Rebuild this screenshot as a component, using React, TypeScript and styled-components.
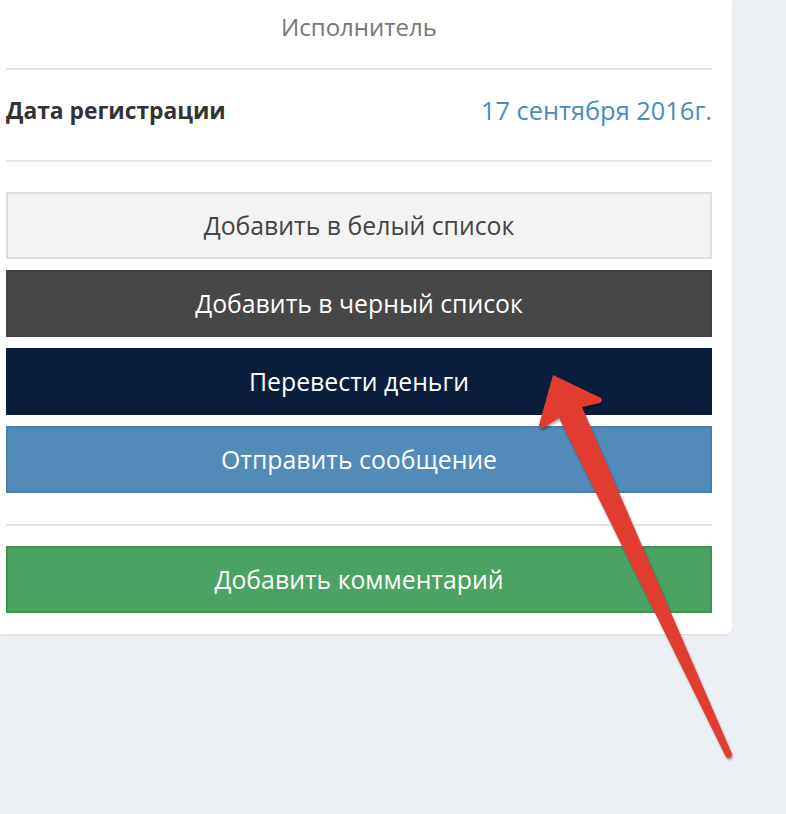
import React from "react";
import styled, { createGlobalStyle } from "styled-components";

const GlobalStyle = createGlobalStyle`
  html, body { margin: 0; padding: 0; }
  body { background: #eceff4; font-family: "Open Sans", "Noto Sans", sans-serif; }
`;

const Page = styled.div`
  position: relative;
  width: 786px;
  height: 814px;
  overflow: hidden;
  background: #eceff4;
`;

const Card = styled.div`
  width: 706px;
  padding: 0 20px 21px 6px;
  background: #ffffff;
  border-radius: 0 0 6px 0;
  box-shadow: 0 1px 2px rgba(0, 0, 0, 0.08);
  display: flex;
  flex-direction: column;
`;

const Title = styled.div`
  padding: 10px 0 24px;
  font-size: 24px;
  line-height: 34px;
  color: #777777;
  text-align: center;
`;

const Divider = styled.div<{ $gapBefore?: number; $gapAfter?: number }>`
  height: 2px;
  background: #e2e2e2;
  margin-top: ${(p) => p.$gapBefore ?? 0}px;
  margin-bottom: ${(p) => p.$gapAfter ?? 0}px;
`;

const InfoRow = styled.div`
  display: flex;
  justify-content: space-between;
  align-items: center;
  height: 34px;
  padding: 23px 0 33px;
`;

const Label = styled.span`
  font-size: 22.8px;
  font-weight: 700;
  color: #333333;
`;

const Value = styled.span`
  font-size: 25.4px;
  color: #4b8bbd;
`;

const Buttons = styled.div`
  display: flex;
  flex-direction: column;
  gap: 11px;
`;

type Variant = "light" | "dark" | "navy" | "blue" | "green";

const palette: Record<Variant, { bg: string; border: string; color: string }> = {
  light: { bg: "#f3f3f3", border: "#dedede", color: "#444444" },
  dark: { bg: "#474747", border: "#424242", color: "#ffffff" },
  navy: { bg: "#0a1e3c", border: "#0a1e3c", color: "#ffffff" },
  blue: { bg: "#518bba", border: "#4a7eab", color: "#ffffff" },
  green: { bg: "#4ba363", border: "#3f9156", color: "#ffffff" },
};

const Button = styled.button<{ $variant: Variant }>`
  box-sizing: border-box;
  width: 100%;
  height: 67px;
  margin: 0;
  padding: 0;
  border: 2px solid ${(p) => palette[p.$variant].border};
  background: ${(p) => palette[p.$variant].bg};
  color: ${(p) => palette[p.$variant].color};
  font-family: "Open Sans", "Noto Sans", sans-serif;
  font-size: 24.8px;
  line-height: 1;
  text-align: center;
  cursor: pointer;
`;

const Arrow = styled.svg`
  position: absolute;
  left: 0;
  top: 0;
  width: 786px;
  height: 814px;
  pointer-events: none;
  filter: drop-shadow(1px 2px 1px rgba(0, 0, 0, 0.35));
`;

export default function App() {
  return (
    <Page>
      <GlobalStyle />
      <Card>
        <Title>Исполнитель</Title>
        <Divider />
        <InfoRow>
          <Label>Дата регистрации</Label>
          <Value>17 сентября 2016г.</Value>
        </InfoRow>
        <Divider $gapAfter={30} />
        <Buttons>
          <Button $variant="light">Добавить в белый список</Button>
          <Button $variant="dark">Добавить в черный список</Button>
          <Button $variant="navy">Перевести деньги</Button>
          <Button $variant="blue">Отправить сообщение</Button>
        </Buttons>
        <Divider $gapBefore={31} $gapAfter={20} />
        <Button $variant="green">Добавить комментарий</Button>
      </Card>
      <Arrow viewBox="0 0 786 814">
        <path
          d="M553 375 L601 398 Q603 401 600 403 L582 407 L732 754 Q731 760 726 757 L559 418 L543 428 Q538 429 539 425 Z"
          fill="#e23c31"
        />
      </Arrow>
    </Page>
  );
}
